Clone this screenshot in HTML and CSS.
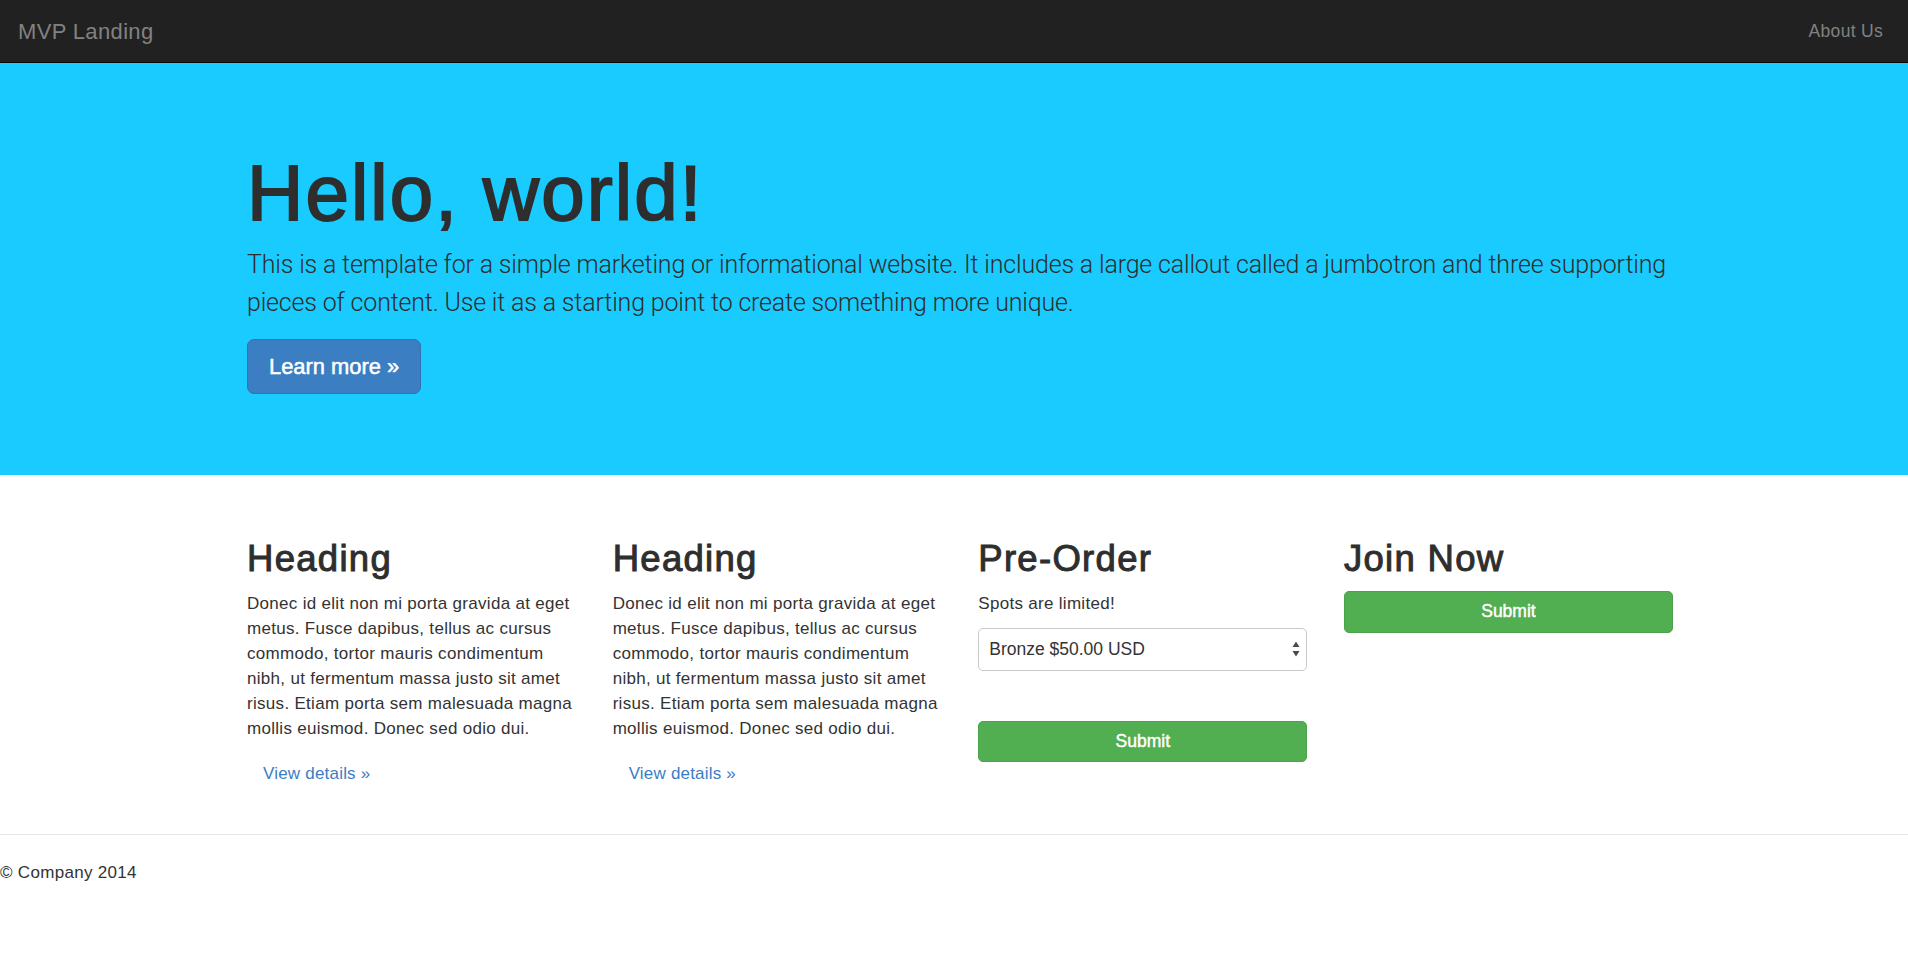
FILE: index.html
```html
<!DOCTYPE html>
<html lang="en">
<head>
<meta charset="utf-8">
<title>MVP Landing</title>
<link rel="stylesheet" href="styles.css">
</head>
<body>
<nav class="navbar">
  <a class="brand" href="#">MVP Landing</a>
  <a class="nav-link" href="#">About Us</a>
</nav>

<section class="jumbotron">
  <div class="container">
    <h1 class="hero-title">Hello, world!</h1>
    <p class="lead">This is a template for a simple marketing or informational website. It includes a large callout called a jumbotron and three supporting pieces of content. Use it as a starting point to create something more unique.</p>
    <div class="hero-actions"><a class="btn btn-primary" href="#">Learn more &raquo;</a></div>
  </div>
</section>

<main class="container features">
  <div class="row">
    <div class="col">
      <h2 class="col-title">Heading</h2>
      <p class="col-text">Donec id elit non mi porta gravida at eget metus. Fusce dapibus, tellus ac cursus commodo, tortor mauris condimentum nibh, ut fermentum massa justo sit amet risus. Etiam porta sem malesuada magna mollis euismod. Donec sed odio dui.</p>
      <div class="col-actions"><a class="btn-link" href="#">View details &raquo;</a></div>
    </div>
    <div class="col">
      <h2 class="col-title">Heading</h2>
      <p class="col-text">Donec id elit non mi porta gravida at eget metus. Fusce dapibus, tellus ac cursus commodo, tortor mauris condimentum nibh, ut fermentum massa justo sit amet risus. Etiam porta sem malesuada magna mollis euismod. Donec sed odio dui.</p>
      <div class="col-actions"><a class="btn-link" href="#">View details &raquo;</a></div>
    </div>
    <div class="col">
      <h2 class="col-title">Pre-Order</h2>
      <p class="col-text">Spots are limited!</p>
      <form class="order-form">
        <div class="select-wrap">
          <select class="select" aria-label="Tier">
            <option>Bronze $50.00 USD</option>
          </select>
          <span class="select-arrows" aria-hidden="true">
            <svg width="8" height="16" viewBox="0 0 8 16"><path d="M4 0.5 L7.5 6 L0.5 6 Z" fill="#4a4a4a"/><path d="M0.5 10 L7.5 10 L4 15.5 Z" fill="#4a4a4a"/></svg>
          </span>
        </div>
        <button class="btn btn-success btn-block order-submit" type="button">Submit</button>
      </form>
    </div>
    <div class="col">
      <h2 class="col-title">Join Now</h2>
      <button class="btn btn-success btn-block" type="button">Submit</button>
    </div>
  </div>
</main>

<footer class="footer">
  <hr class="rule">
  <p class="copyright">&copy; Company 2014</p>
</footer>
</body>
</html>
```

FILE: styles.css
```css
* {
  box-sizing: border-box;
}

html,
body {
  margin: 0;
  padding: 0;
}

body {
  font-family: "Liberation Sans", Arial, Helvetica, sans-serif;
  font-size: 17px;
  line-height: 25px;
  color: #333;
  background: #fff;
}

a {
  text-decoration: none;
}

/* Navbar */
.navbar {
  height: 63px;
  background: #212121;
  border-bottom: 1px solid #080808;
  display: flex;
  align-items: center;
  justify-content: space-between;
  padding: 0 25px 0 18px;
}

.brand {
  font-size: 22px;
  color: #818181;
  letter-spacing: 0.35px;
}

.nav-link {
  font-size: 17.5px;
  color: #818181;
  letter-spacing: 0.3px;
}

/* Jumbotron */
.jumbotron {
  background: #19cbfe;
  padding: 86px 0 81px;
}

.container {
  width: 1426px;
  margin-left: 247px;
}

.hero-title {
  margin: 0 0 9px;
  font-size: 78px;
  line-height: 88px;
  font-weight: 400;
  letter-spacing: 2.1px;
  color: #2e2e2e;
  -webkit-text-stroke: 1.9px #2e2e2e;
}

.lead {
  margin: 0;
  font-family: Roboto, "Liberation Sans", sans-serif;
  font-weight: 300;
  font-size: 25px;
  line-height: 37.5px;
  letter-spacing: -0.18px;
  color: #2e2e2e;
}

.hero-actions {
  margin-top: 18px;
}

.btn {
  display: inline-block;
  font-family: "Liberation Sans", Arial, sans-serif;
  color: #fff;
  border: 1px solid transparent;
  cursor: pointer;
  text-align: center;
}

.btn-primary {
  height: 55px;
  line-height: 53px;
  padding: 0 21px;
  font-size: 21.9px;
  background: #3b7ec2;
  border-color: #3570b0;
  border-radius: 7px;
  -webkit-text-stroke: 0.5px #fff;
}

/* Feature columns */
.features {
  padding-top: 64px;
}

.row {
  display: grid;
  grid-template-columns: repeat(4, 1fr);
  column-gap: 36.5px;
  align-items: start;
}

.col-title {
  margin: 0 0 12px;
  font-size: 36.5px;
  line-height: 40px;
  font-weight: 400;
  letter-spacing: 1.3px;
  color: #2e2e2e;
  -webkit-text-stroke: 1px #2e2e2e;
}

.col-text {
  margin: 0 0 12px;
  letter-spacing: 0.3px;
}

.col-actions {
  margin-bottom: 12px;
}

.btn-link {
  display: inline-block;
  padding: 7px 15px;
  border: 1px solid transparent;
  line-height: 25px;
  font-size: 17px;
  letter-spacing: 0.2px;
  color: #3b7dc4;
}

.select-wrap {
  position: relative;
  height: 42.5px;
}

.select {
  -webkit-appearance: none;
  appearance: none;
  width: 100%;
  height: 42.5px;
  margin: 0;
  padding: 0 30px 0 10px;
  font-family: "Liberation Sans", Arial, sans-serif;
  font-size: 17.5px;
  color: #333;
  background: #fff;
  border: 1px solid #c9c9c9;
  border-radius: 5px;
}

.select-arrows {
  position: absolute;
  right: 7px;
  top: 13px;
  width: 8px;
  height: 16px;
  display: block;
  pointer-events: none;
}

.select-arrows svg {
  display: block;
}

.btn-success {
  height: 41.5px;
  line-height: 39.5px;
  padding: 0 12px;
  font-size: 17.5px;
  background: #51ae51;
  border-color: #4aa34a;
  border-radius: 5px;
  -webkit-text-stroke: 0.45px #fff;
}

.btn-block {
  display: block;
  width: 100%;
}

.order-submit {
  margin-top: 50px;
}

/* Footer */
.footer {
  padding-top: 28px;
}

.rule {
  margin: 0;
  border: 0;
  border-top: 1px solid #e8e8e8;
  height: 0;
}

.copyright {
  margin: 25px 0 0;
  letter-spacing: 0.3px;
}
```
